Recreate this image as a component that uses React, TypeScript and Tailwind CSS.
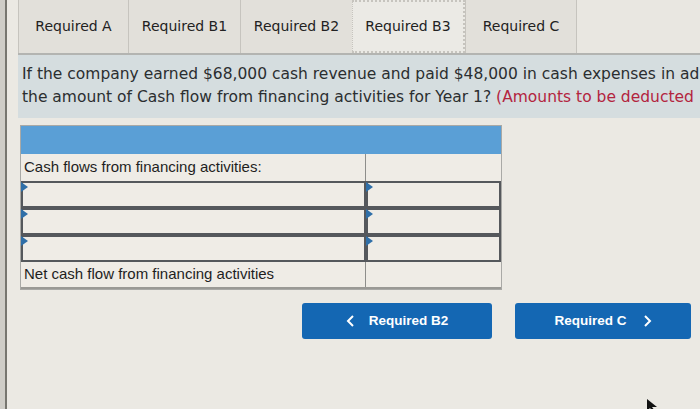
import React from 'react';

const tabs = ['Required A', 'Required B1', 'Required B2', 'Required B3', 'Required C'];
const tabWidths = ['w-[110px]', 'w-[112px]', 'w-[112px]', 'w-[113px]', 'w-[112px]'];

function InputRow() {
  return (
    <div className="flex h-[27px]">
      <div className="relative w-[345px] border-2 border-[#55585c] bg-[#efece6]">
        <span className="absolute left-[-2px] top-[-1px] w-0 h-0 border-y-[5px] border-y-transparent border-l-[7px] border-l-[#2f6fa8]" />
      </div>
      <div className="relative flex-1 border-2 border-[#55585c] bg-[#efece6]">
        <span className="absolute left-[-2px] top-[-1px] w-0 h-0 border-y-[5px] border-y-transparent border-l-[7px] border-l-[#2f6fa8]" />
      </div>
    </div>
  );
}

export default function App() {
  return (
    <div className="relative w-[700px] h-[409px] overflow-hidden bg-[#ebe9e3] flex" style={{ fontFamily: '"DejaVu Sans", Verdana, sans-serif' }}>
      {/* left edge of the monitor frame */}
      <div className="w-[5px] shrink-0 bg-[#cfcdc7]" />
      <div className="w-[2px] shrink-0 bg-[#77766f]" />
      <div className="flex-1 min-w-0 flex flex-col pl-[11px]">
        {/* tab strip */}
        <div className="flex h-[55px] border-b-2 border-[#b3b4b1]">
          {tabs.map((t, i) => (
            <div
              key={t}
              className={`${tabWidths[i]} shrink-0 flex items-center justify-center text-[14px] text-[#222] bg-[#e2e0da] border-l border-[#c6c4be] ${i === 3 ? 'border-2 border-dotted border-[#6a6e78] bg-[#ebeae5]' : ''} ${i === 4 ? 'border-r' : ''}`}
            >
              {t}
            </div>
          ))}
          <div className="flex-1 bg-[#e9e7e1]" />
        </div>

        {/* question */}
        <div className="h-[63px] bg-[#d5dddf] pl-[4px] pt-[8px] text-[15.5px] leading-[23px] text-[#2b2e30] whitespace-nowrap overflow-hidden">
          <p>If the company earned $68,000 cash revenue and paid $48,000 in cash expenses in ad</p>
          <p>
            the amount of Cash flow from financing activities for Year 1? <span className="text-[#b3243e]">(Amounts to be deducted</span>
          </p>
        </div>

        {/* table */}
        <div className="mt-[7px] ml-[2px] w-[482px] border border-[#a9a9a6] text-[15px] text-[#1e1e1e]" style={{ fontFamily: '"Liberation Sans", Arial, sans-serif' }}>
          <div className="h-[28px] bg-[#5a9fd6]" />
          <div className="flex h-[27px]">
            <div className="w-[345px] flex items-center pl-[3px] bg-[#efece6] border-r border-[#8e8e8b]">Cash flows from financing activities:</div>
            <div className="flex-1 bg-[#efece6]" />
          </div>
          <InputRow />
          <InputRow />
          <InputRow />
          <div className="flex h-[27px] border-b-2 border-[#9a9995]">
            <div className="w-[345px] flex items-center pl-[3px] bg-[#efece6] border-r border-[#8e8e8b]">Net cash flow from financing activities</div>
            <div className="flex-1 bg-[#efece6]" />
          </div>
        </div>

        {/* navigation buttons */}
        <div className="mt-[13px] flex pl-[284px] gap-[23px] text-white text-[13.5px] font-bold" style={{ fontFamily: '"Liberation Sans", Arial, sans-serif' }}>
          <div className="w-[190px] shrink-0 h-[36px] rounded-[3px] bg-[#1467b3] flex items-center justify-center gap-[14px]">
            <svg width="9" height="12" viewBox="0 0 9 12"><path d="M7 1 L2 6 L7 11" fill="none" stroke="white" strokeWidth="2" /></svg>
            <span>Required B2</span>
          </div>
          <div className="w-[176px] shrink-0 h-[36px] rounded-[3px] bg-[#1467b3] flex items-center justify-center gap-[16px]">
            <span>Required C</span>
            <svg width="9" height="12" viewBox="0 0 9 12"><path d="M2 1 L7 6 L2 11" fill="none" stroke="white" strokeWidth="2" /></svg>
          </div>
        </div>
      </div>

      {/* mouse pointer */}
      <svg className="absolute left-[646px] top-[398px]" width="12" height="14" viewBox="0 0 12 14">
        <path d="M1 1 L1 13 L4 10 L7 14 L9 13 L6 9 L11 9 Z" fill="#111" />
      </svg>
    </div>
  );
}
